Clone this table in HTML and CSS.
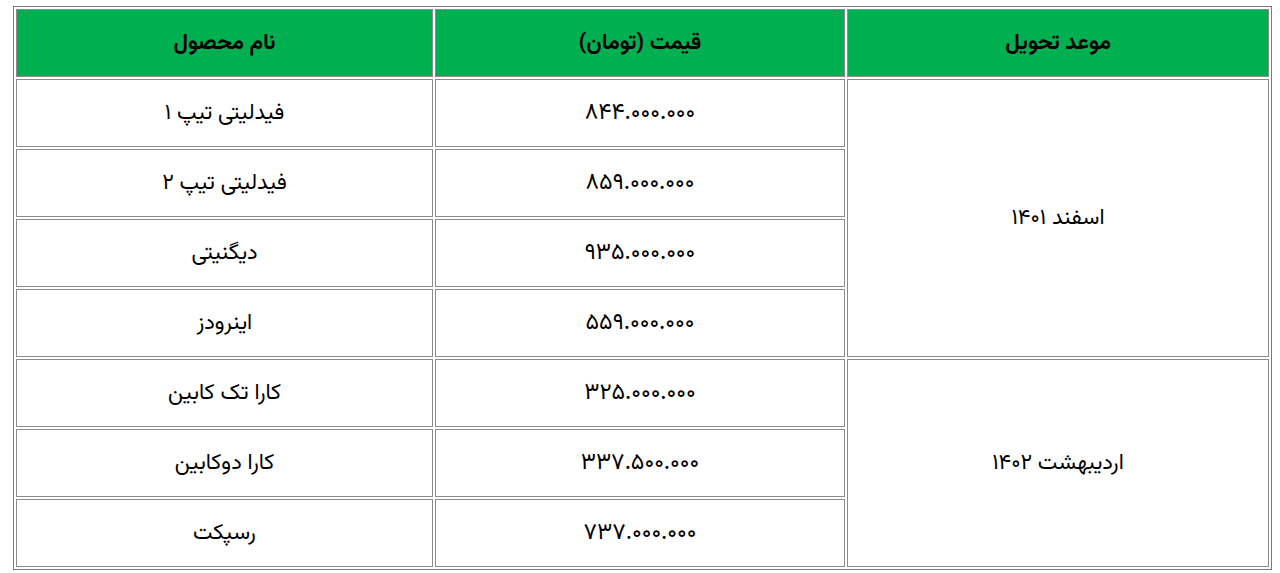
FILE: index.html
```html
<!DOCTYPE html>
<html lang="fa" dir="rtl">
<head>
<meta charset="utf-8">
<title>قیمت</title>
<link rel="stylesheet" href="styles.css">
</head>
<body>
<div class="wrap">
<table class="price">
<thead>
<tr>
<th class="c-date">موعد تحویل</th>
<th class="c-price">قیمت (تومان)</th>
<th class="c-name">نام محصول</th>
</tr>
</thead>
<tbody>
<tr>
<td rowspan="4">اسفند ۱۴۰۱</td>
<td class="num">۸۴۴.۰۰۰.۰۰۰</td>
<td>فیدلیتی تیپ ۱</td>
</tr>
<tr>
<td class="num">۸۵۹.۰۰۰.۰۰۰</td>
<td>فیدلیتی تیپ ۲</td>
</tr>
<tr>
<td class="num">۹۳۵.۰۰۰.۰۰۰</td>
<td>دیگنیتی</td>
</tr>
<tr>
<td class="num">۵۵۹.۰۰۰.۰۰۰</td>
<td>اینرودز</td>
</tr>
<tr>
<td rowspan="3">اردیبهشت ۱۴۰۲</td>
<td class="num">۳۲۵.۰۰۰.۰۰۰</td>
<td>کارا تک کابین</td>
</tr>
<tr>
<td class="num">۳۳۷.۵۰۰.۰۰۰</td>
<td>کارا دوکابین</td>
</tr>
<tr>
<td class="num">۷۳۷.۰۰۰.۰۰۰</td>
<td>رسپکت</td>
</tr>
</tbody>
</table>
</div>
</body>
</html>
```
FILE: styles.css
```css
html, body {
  margin: 0;
  background: #ffffff;
}
.wrap {
  padding: 6px 8px 0 13px;
}
.price {
  direction: rtl;
  width: 1259px;
  table-layout: fixed;
  border: 1px solid #7a7a7a;
  border-spacing: 2px;
  font-family: "Vazirmatn", "Noto Sans Arabic", "DejaVu Sans", sans-serif;
  font-size: 22px;
  color: #000;
}
.price th,
.price td {
  box-sizing: border-box;
  border: 1px solid #8c8c8c;
  text-align: center;
  vertical-align: middle;
  padding: 0 8px;
  height: 68px;
}
.price th {
  background: #00b050;
  font-weight: bold;
  color: #000;
}
.price .num {
  font-size: 23px;
  letter-spacing: 2.5px;
}
.c-date { width: 422px; }
.c-price { width: 410px; }
.c-name { width: 417px; }
```
